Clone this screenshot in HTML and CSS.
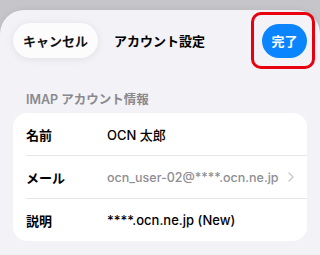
FILE: index.html
```html
<!DOCTYPE html>
<html lang="ja">
<head>
  <meta charset="UTF-8">
  <title>アカウント設定</title>
  <link rel="stylesheet" href="styles.css">
</head>
<body>

  <div class="sheet">
    <header class="nav">
      <button class="pill cancel">キャンセル</button>
      <div class="nav-title">アカウント設定</div>
      <div class="done-wrap">
        <button class="pill done">完了</button>
        <span class="marker"></span>
      </div>
    </header>

    <div class="section-title">IMAP アカウント情報</div>
    <div class="card">
      <div class="row">
        <span class="label">名前</span>
        <span class="value">OCN 太郎</span>
      </div>
      <div class="row">
        <span class="label">メール</span>
        <span class="value muted">ocn_user-02@****.ocn.ne.jp</span>
        <span class="chevron">
          <svg width="6" height="10" viewBox="0 0 6 10"><path d="M1 1l4 4-4 4" fill="none" stroke="#c7c7cc" stroke-width="1.3" stroke-linecap="round" stroke-linejoin="round"/></svg>
        </span>
      </div>
      <div class="row">
        <span class="label">説明</span>
        <span class="value">****.ocn.ne.jp (New)</span>
      </div>
    </div>
  </div>

</body>
</html>
```

FILE: styles.css
```css
html, body {
  height: 100%;
}
body {
  margin: 0;
  background: #c6c6ca;
  font-family: Inter, "Noto Sans CJK JP", sans-serif;
  color: #000;
  overflow: hidden;
}
.sheet {
  margin-top: 10px;
  height: 245px;
  background: #f2f2f7;
  border-radius: 24px 24px 0 0;
  box-shadow: 0 0 6px rgba(0, 0, 0, 0.08);
}
.nav {
  display: flex;
  align-items: center;
  padding: 13px 13px 0;
  height: 35px;
}
.pill {
  border: none;
  font-family: inherit;
  font-weight: 700;
  font-size: 13px;
  cursor: pointer;
}
.cancel {
  height: 35px;
  padding: 0 10px;
  border-radius: 18px;
  background: #fcfcfd;
  color: #111;
  box-shadow: 0 1px 8px rgba(0, 0, 0, 0.08);
}
.nav-title {
  margin-left: 16px;
  font-weight: 700;
  font-size: 13px;
}
.done-wrap {
  margin-left: auto;
  position: relative;
}
.done {
  width: 45px;
  height: 34px;
  border-radius: 17px;
  background: #0a84ff;
  color: #fff;
  padding: 0;
}
.marker {
  position: absolute;
  left: -11px;
  top: -12px;
  width: 58px;
  height: 51px;
  border: 3px solid #e8000e;
  border-radius: 10px;
}
.section-title {
  margin: 34px 0 0 26px;
  font-size: 12.5px;
  font-weight: 600;
  color: #8a8a8e;
  height: 16px;
  line-height: 16px;
}
.card {
  margin: 5px 13px 0;
  background: #fff;
  border-radius: 14px;
  padding-left: 13px;
}
.row {
  display: flex;
  align-items: center;
  height: 42px;
  padding-right: 13px;
  border-bottom: 1px solid #e5e5ea;
  font-size: 13px;
  white-space: nowrap;
}
.row:last-child {
  border-bottom: none;
}
.label {
  width: 81px;
  font-weight: 600;
}
.value {
  flex: 1;
  font-weight: 500;
}
.muted {
  color: #8e8e93;
  font-size: 12.5px;
}
.chevron {
  display: flex;
  margin-left: 4px;
}
```
